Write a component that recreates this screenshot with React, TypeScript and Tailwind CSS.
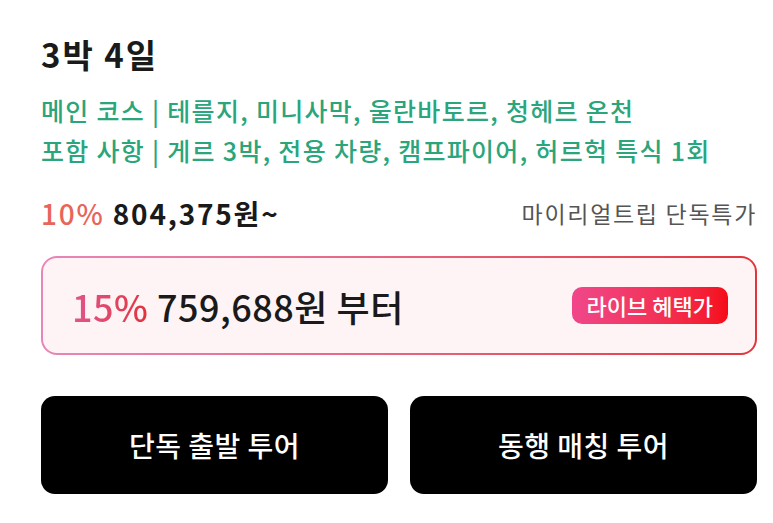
import React from 'react'

const font = { fontFamily: '"Noto Sans CJK KR", "Noto Sans", sans-serif' }

export default function App() {
  return (
    <div className="min-h-[523px] w-[773px] bg-white pl-[41px] pr-[16px] pt-[30px]" style={font}>
      <h1 className="text-[33px] font-semibold leading-[48px] tracking-[2px] text-[#1a1a1a]">3박 4일</h1>

      <div className="mt-[12px] text-[25px] font-medium leading-[40px] tracking-[1.3px] text-[#2aa57c]">
        <p>메인 코스 | 테를지, 미니사막, 울란바토르, 청헤르 온천</p>
        <p>포함 사항 | 게르 3박, 전용 차량, 캠프파이어, 허르헉 특식 1회</p>
      </div>

      <div className="mt-[25px] flex h-[36px] items-center justify-between">
        <div className="text-[28px] font-semibold leading-[36px] tracking-[1.8px]">
          <span className="font-medium text-[#e8655a]">10%</span>{' '}
          <span className="text-[#1a1a1a]">804,375원~</span>
        </div>
        <span className="text-[23px] leading-[30px] tracking-[1.7px] text-[#555]">마이리얼트립 단독특가</span>
      </div>

      <div className="mt-[25px] rounded-[16px] bg-gradient-to-r from-[#e886b8] to-[#e2353d] p-[2px]">
        <div className="flex h-[95px] items-center justify-between rounded-[14px] bg-[#fff4f5] pl-[29px] pr-[27px]">
          <div className="text-[36px] font-medium leading-[44px] tracking-[0.5px]">
            <span className="bg-gradient-to-r from-[#e0558c] to-[#e0323c] bg-clip-text text-transparent">15%</span>{' '}
            <span className="text-[#1a1a1a]">759,688원 부터</span>
          </div>
          <span className="flex h-[37px] items-center rounded-[10px] bg-gradient-to-r from-[#f0468a] to-[#f50a16] px-[15px] text-[22px] font-medium tracking-[0px] text-white">
            라이브 혜택가
          </span>
        </div>
      </div>

      <div className="mt-[41px] grid grid-cols-2 gap-[22px]">
        <button className="flex h-[98px] items-center justify-center rounded-[14px] bg-black text-[28px] font-medium tracking-[0.5px] text-white">
          단독 출발 투어
        </button>
        <button className="flex h-[98px] items-center justify-center rounded-[14px] bg-black text-[28px] font-medium tracking-[0.5px] text-white">
          동행 매칭 투어
        </button>
      </div>
    </div>
  )
}
